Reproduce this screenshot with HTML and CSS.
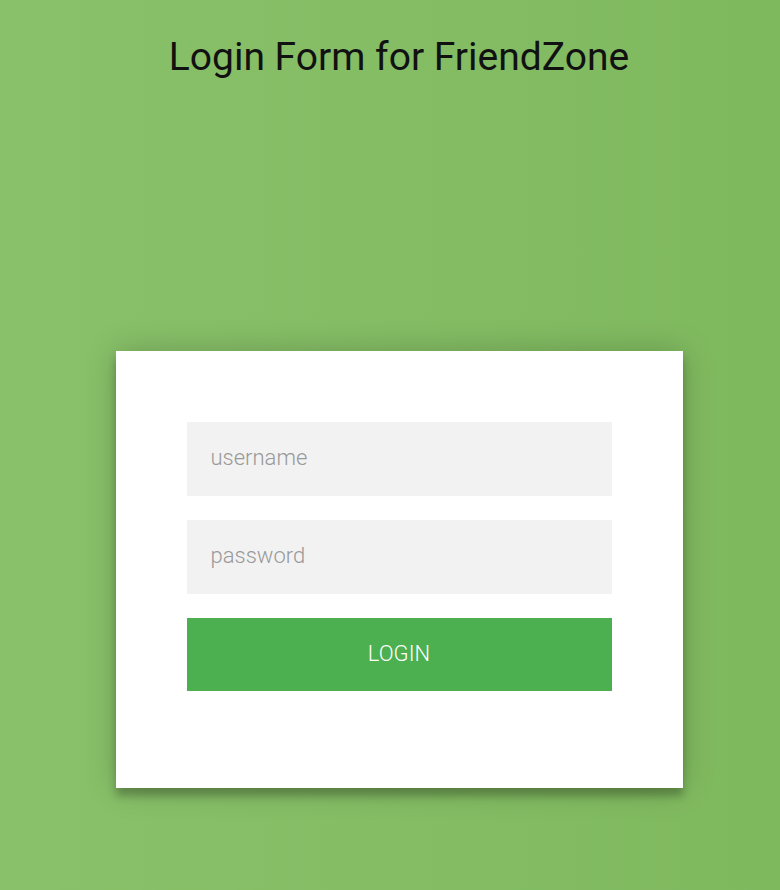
FILE: index.html
```html
<!DOCTYPE html>
<html>
<head>
<meta charset="utf-8">
<link rel="stylesheet" href="styles.css">
</head>
<body>
<div class="page">
  <h1 class="title">Login Form for FriendZone</h1>
  <div class="login-page">
    <form class="form">
      <input class="field" type="text" placeholder="username">
      <input class="field" type="password" placeholder="password">
      <button class="btn" type="button">Login</button>
    </form>
  </div>
</div>
</body>
</html>
```
FILE: styles.css
```css
html, body {
  margin: 0;
  padding: 0;
  height: 100%;
}
body {
  background: #83bc63;
  background: linear-gradient(to left, #7fb95e, #89c16a);
  font-family: Roboto, "Liberation Sans", sans-serif;
  overflow: hidden;
}
.page {
  width: 798px;
  display: flex;
  flex-direction: column;
  align-items: center;
}
.title {
  margin: 33px 0 0;
  font-size: 39px;
  font-weight: 400;
  line-height: 48px;
  color: #111;
}
.login-page {
  margin-top: 270px;
  width: 567px;
}
.form {
  background: #fff;
  padding: 71px 71px 97px;
  display: flex;
  flex-direction: column;
  gap: 24px;
  box-shadow: 0 0 31px 0 rgba(0,0,0,0.2), 0 8px 8px 0 rgba(0,0,0,0.24);
}
.field {
  font-family: Roboto, "Liberation Sans", sans-serif;
  background: #f2f2f2;
  border: 0;
  outline: 0;
  margin: 0;
  height: 74px;
  padding: 0 24px 3px;
  font-size: 22px;
  font-weight: 300;
  color: #333;
  box-sizing: border-box;
  width: 100%;
}
.field::placeholder {
  color: #999;
}
.btn {
  font-family: Roboto, "Liberation Sans", sans-serif;
  text-transform: uppercase;
  background: #4CAF50;
  border: 0;
  outline: 0;
  height: 73px;
  width: 100%;
  color: #fff;
  font-size: 22px;
  font-weight: 300;
  margin: 0;
  padding: 0 0 2px;
  cursor: pointer;
}
```
